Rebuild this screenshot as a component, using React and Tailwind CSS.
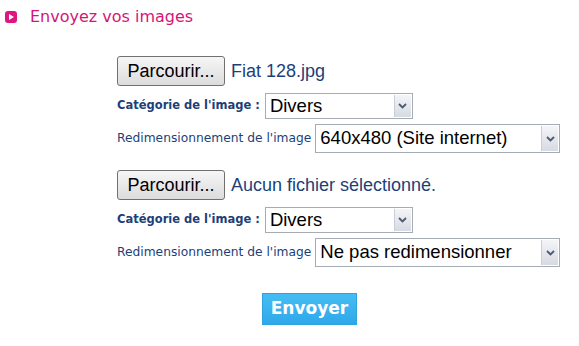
import React from 'react';

function Arrow() {
  return (
    <div className="flex h-full w-[17px] items-center justify-center border-l border-[#c9ced6] bg-gradient-to-b from-[#f4f5f8] to-[#d6dae2]">
      <svg width="9" height="6" viewBox="0 0 9 6">
        <path d="M1 1 L4.5 4.5 L8 1" stroke="#4d5a70" strokeWidth="1.8" fill="none" />
      </svg>
    </div>
  );
}

function FakeSelect({ value, width, height }) {
  return (
    <div
      className={`flex items-center justify-between border border-[#a5acb5] bg-white pl-[4px] pr-[1px] py-[1px] ${width} ${height}`}
    >
      <span className="text-[18.5px] leading-none text-black font-['Liberation_Sans',Arial,sans-serif]">{value}</span>
      <Arrow />
    </div>
  );
}

function Browse({ file }) {
  return (
    <div className="flex items-center gap-[6px]">
      <button className="h-[30px] w-[108px] rounded-[3px] border border-[#707070] bg-gradient-to-b from-[#f6f6f6] to-[#dcdcdc] text-[18px] text-black font-['Liberation_Sans',Arial,sans-serif]">
        Parcourir...
      </button>
      <span className="text-[18px] text-[#1c3f7a] font-['Liberation_Sans',Arial,sans-serif]">{file}</span>
    </div>
  );
}

function ImageBlock({ file, resize }) {
  return (
    <div className="flex flex-col">
      <Browse file={file} />
      <div className="mt-[7px] flex items-center gap-[5px]">
        <span className="text-[11.5px] font-bold text-[#1c3f7a] font-['DejaVu_Sans',Verdana,sans-serif]">Catégorie de l'image :</span>
        <FakeSelect value="Divers" width="w-[148px]" height="h-[26px]" />
      </div>
      <div className="mt-[5px] flex items-center gap-[4px]">
        <span className="text-[12.25px] text-[#1c3f7a] font-['DejaVu_Sans',Verdana,sans-serif]">Redimensionnement de l'image</span>
        <FakeSelect value={resize} width="w-[245px]" height="h-[29px]" />
      </div>
    </div>
  );
}

export default function App() {
  return (
    <div className="h-[346px] w-[579px] bg-white">
      <div className="flex items-center gap-[13px] pl-[5px] pt-[5px]">
        <div className="flex h-[12px] w-[12px] items-center justify-center rounded-[3px] bg-[#e0157f]">
          <svg width="5" height="6" viewBox="0 0 5 6">
            <path d="M0 0 L5 3 L0 6 Z" fill="white" />
          </svg>
        </div>
        <span className="text-[16px] text-[#d4157a] font-['DejaVu_Sans',Verdana,sans-serif]">Envoyez vos images</span>
      </div>
      <div className="ml-[117px] mt-[27px] flex flex-col gap-[17px]">
        <ImageBlock file="Fiat 128.jpg" resize="640x480 (Site internet)" />
        <ImageBlock file="Aucun fichier sélectionné." resize="Ne pas redimensionner" />
      </div>
      <div className="ml-[262px] mt-[26px]">
        <button className="h-[32px] w-[95px] border border-[#2fa3df] bg-gradient-to-b from-[#45bdf3] to-[#2ea8ea] text-[17px] font-bold text-white font-['DejaVu_Sans',Verdana,sans-serif]">
          Envoyer
        </button>
      </div>
    </div>
  );
}
